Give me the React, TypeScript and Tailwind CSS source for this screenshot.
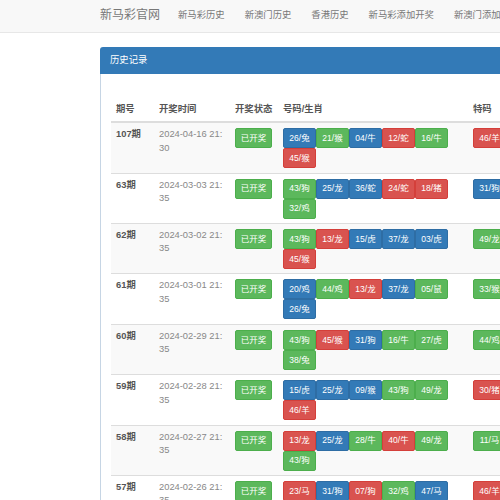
type Ball = { n: string; c: "g" | "b" | "r" };

type Row = { no: string; date: string; time: string; balls: Ball[]; sp: Ball };

const colors: Record<Ball["c"], string> = {
  g: "bg-[#5cb85c] border-[#4cae4c]",
  b: "bg-[#337ab7] border-[#2e6da4]",
  r: "bg-[#d9534f] border-[#d43f3a]",
};

const b = (n: string, c: Ball["c"]): Ball => ({ n, c });

const rows: Row[] = [
  { no: "107期", date: "2024-04-16 21:", time: "30", balls: [b("26/兔", "b"), b("21/猴", "g"), b("04/牛", "b"), b("12/蛇", "r"), b("16/牛", "g"), b("45/猴", "r")], sp: b("46/羊", "r") },
  { no: "63期", date: "2024-03-03 21:", time: "35", balls: [b("43/狗", "g"), b("25/龙", "b"), b("36/蛇", "b"), b("24/蛇", "r"), b("18/猪", "r"), b("32/鸡", "g")], sp: b("31/狗", "b") },
  { no: "62期", date: "2024-03-02 21:", time: "35", balls: [b("43/狗", "g"), b("13/龙", "r"), b("15/虎", "b"), b("37/龙", "b"), b("03/虎", "b"), b("45/猴", "r")], sp: b("49/龙", "g") },
  { no: "61期", date: "2024-03-01 21:", time: "35", balls: [b("20/鸡", "b"), b("44/鸡", "g"), b("13/龙", "r"), b("37/龙", "b"), b("05/鼠", "g"), b("26/兔", "b")], sp: b("33/猴", "g") },
  { no: "60期", date: "2024-02-29 21:", time: "35", balls: [b("43/狗", "g"), b("45/猴", "r"), b("31/狗", "b"), b("16/牛", "g"), b("27/虎", "g"), b("38/兔", "g")], sp: b("44/鸡", "g") },
  { no: "59期", date: "2024-02-28 21:", time: "35", balls: [b("15/虎", "b"), b("25/龙", "b"), b("09/猴", "b"), b("43/狗", "g"), b("49/龙", "g"), b("46/羊", "r")], sp: b("30/猪", "r") },
  { no: "58期", date: "2024-02-27 21:", time: "35", balls: [b("13/龙", "r"), b("25/龙", "b"), b("28/牛", "g"), b("40/牛", "r"), b("49/龙", "g"), b("43/狗", "g")], sp: b("11/马", "g") },
  { no: "57期", date: "2024-02-26 21:", time: "35", balls: [b("23/马", "r"), b("31/狗", "b"), b("07/狗", "r"), b("32/鸡", "g"), b("47/马", "b"), b("46/羊", "r")], sp: b("46/羊", "r") },
];

function Badge({ ball }: { ball: Ball }) {
  return (
    <span className={`inline-flex h-[20px] w-[33px] items-center justify-center rounded-[2px] border text-[8.5px] leading-none text-white ${colors[ball.c]}`}>
      {ball.n}
    </span>
  );
}

const nav = ["新马彩历史", "新澳门历史", "香港历史", "新马彩添加开奖", "新澳门添加开奖"];

export default function App() {
  return (
    <div className="h-[500px] w-[500px] overflow-hidden bg-white text-[9.33px] leading-[13.3px] text-[#333] [font-family:'Liberation_Sans','Noto_Sans_CJK_SC',sans-serif]">
      <nav className="flex h-[33px] items-center whitespace-nowrap border-b border-[#e7e7e7] bg-[#f8f8f8] pl-[100px]">
        <span className="mr-[8px] shrink-0 text-[12px] text-[#777]">新马彩官网</span>
        {nav.map((item) => (
          <span key={item} className="shrink-0 px-[10px] text-[#777]">{item}</span>
        ))}
      </nav>

      <div className="ml-[100px] mt-[14px] w-[620px] rounded-t-[3px]">
        <div className="flex h-[27px] items-center rounded-t-[3px] bg-[#337ab7] px-[10px] text-white">历史记录</div>
        <div className="border-l border-[#c6d5e4] px-[10px] pt-[24px]">
          <table className="w-[600px] table-fixed border-collapse">
            <colgroup>
              <col className="w-[43px]" />
              <col className="w-[76px]" />
              <col className="w-[48px]" />
              <col className="w-[190px]" />
              <col />
            </colgroup>
            <thead>
              <tr className="border-b-2 border-[#ddd] text-left font-bold text-[#555]">
                <th className="px-[5px] py-[5px]">期号</th>
                <th className="px-[5px] py-[5px]">开奖时间</th>
                <th className="px-[5px] py-[5px]">开奖状态</th>
                <th className="px-[5px] py-[5px]">号码/生肖</th>
                <th className="px-[5px] py-[5px]">特码</th>
              </tr>
            </thead>
            <tbody>
              {rows.map((r, i) => (
                <tr key={r.no} className={`border-t border-[#ddd] align-top ${i % 2 === 0 ? "bg-[#f9f9f9]" : "bg-white"}`}>
                  <td className="px-[5px] pt-[5px] font-bold text-[#555]">{r.no}</td>
                  <td className="px-[5px] pt-[5px] text-[#888]">
                    {r.date}
                    <br />
                    {r.time}
                  </td>
                  <td className="px-[5px] pt-[5px]">
                    <span className="inline-flex h-[20px] w-[37px] items-center justify-center rounded-[2px] border border-[#4cae4c] bg-[#5cb85c] text-[8.5px] leading-none text-white">已开奖</span>
                  </td>
                  <td className="px-[5px] pt-[5px] pb-[4.4px]">
                    <div className="flex flex-wrap">
                      {r.balls.map((ball, j) => (
                        <Badge key={j} ball={ball} />
                      ))}
                    </div>
                  </td>
                  <td className="px-[5px] pt-[5px]">
                    <Badge ball={r.sp} />
                  </td>
                </tr>
              ))}
            </tbody>
          </table>
        </div>
      </div>
    </div>
  );
}
